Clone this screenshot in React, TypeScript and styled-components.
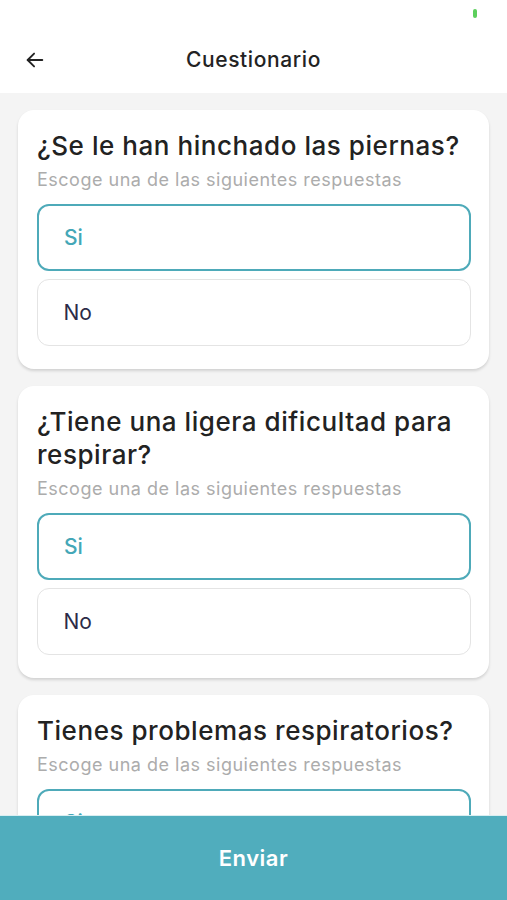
import React from "react";
import styled, { createGlobalStyle } from "styled-components";

const GlobalStyle = createGlobalStyle`
  html, body {
    margin: 0;
    padding: 0;
    background: #f4f4f4;
  }
  body {
    font-family: Inter, "Noto Sans", "Liberation Sans", sans-serif;
  }
`;

const Screen = styled.div`
  width: 507px;
  height: 900px;
  display: flex;
  flex-direction: column;
  background: #f4f4f4;
  overflow: hidden;
`;

const TopBar = styled.div`
  background: #ffffff;
  display: flex;
  flex-direction: column;
`;

const StatusBar = styled.div`
  height: 26px;
  display: flex;
  justify-content: flex-end;
  align-items: flex-start;
  padding: 9px 30px 0 0;
  box-sizing: border-box;
`;

const Battery = styled.span`
  width: 4px;
  height: 9px;
  border-radius: 2px;
  background: #5ccf5c;
`;

const Header = styled.header`
  height: 67px;
  display: flex;
  align-items: center;
  padding: 0 0 0 22px;
`;

const BackButton = styled.button`
  border: 0;
  background: none;
  padding: 0;
  width: 26px;
  height: 26px;
  display: flex;
  align-items: center;
  justify-content: center;
  color: #222222;
`;

const HeaderTitle = styled.h1`
  flex: 1;
  margin: 0 0 0 -26px;
  padding-right: 22px;
  text-align: center;
  font-size: 21px;
  font-weight: 500;
  color: #232323;
  letter-spacing: 0.6px;
`;

const Scroll = styled.div`
  flex: 1;
  overflow: hidden;
  padding: 17px 18px 0;
  display: flex;
  flex-direction: column;
  gap: 17px;
`;

const Card = styled.section`
  background: #ffffff;
  border-radius: 16px;
  box-shadow: 0 2px 3px rgba(0, 0, 0, 0.14);
  padding: 19px 18px 23px 19px;
  flex-shrink: 0;
`;

const Question = styled.h2`
  margin: 0;
  font-size: 26px;
  line-height: 33px;
  font-weight: 500;
  letter-spacing: 0.55px;
  color: #222222;
`;

const Hint = styled.p`
  margin: 6px 0 12px;
  font-size: 18px;
  line-height: 24px;
  letter-spacing: 0.5px;
  color: #acacac;
`;

const Options = styled.div`
  display: flex;
  flex-direction: column;
  gap: 8px;
`;

const Option = styled.div<{ $selected?: boolean }>`
  height: 67px;
  box-sizing: border-box;
  border-radius: 12px;
  border: ${(p) => (p.$selected ? "2px solid #4eaab9" : "1.5px solid #e4e4e4")};
  display: flex;
  align-items: center;
  padding-left: ${(p) => (p.$selected ? "25px" : "25.5px")};
  font-size: 21px;
  font-weight: ${(p) => (p.$selected ? 500 : 400)};
  color: ${(p) => (p.$selected ? "#44a7b7" : "#2c2b48")};
`;

const SubmitButton = styled.button`
  flex-shrink: 0;
  height: 85px;
  border: 0;
  border-top: 1px solid #d9eef1;
  background: #50adbd;
  color: #ffffff;
  font-family: inherit;
  font-size: 22px;
  font-weight: 600;
  letter-spacing: 0.5px;
  padding-bottom: 2px;
`;

const questions = [
  { text: "¿Se le han hinchado las piernas?", answer: "Si" },
  { text: "¿Tiene una ligera dificultad para respirar?", answer: "Si" },
  { text: "Tienes problemas respiratorios?", answer: "Si" },
];

const App = () => {
  return (
    <Screen>
      <GlobalStyle />
      <TopBar>
        <StatusBar>
          <Battery />
        </StatusBar>
        <Header>
          <BackButton aria-label="Volver">
            <svg width="22" height="22" viewBox="0 0 24 24" fill="none" stroke="currentColor" strokeWidth="2" strokeLinecap="round" strokeLinejoin="round">
              <path d="M20 12H4" />
              <path d="M11 5l-7 7 7 7" />
            </svg>
          </BackButton>
          <HeaderTitle>Cuestionario</HeaderTitle>
        </Header>
      </TopBar>
      <Scroll>
        {questions.map((q) => (
          <Card key={q.text}>
            <Question>{q.text}</Question>
            <Hint>Escoge una de las siguientes respuestas</Hint>
            <Options>
              <Option $selected={q.answer === "Si"}>Si</Option>
              <Option $selected={q.answer === "No"}>No</Option>
            </Options>
          </Card>
        ))}
      </Scroll>
      <SubmitButton>Enviar</SubmitButton>
    </Screen>
  );
};

export default App;
